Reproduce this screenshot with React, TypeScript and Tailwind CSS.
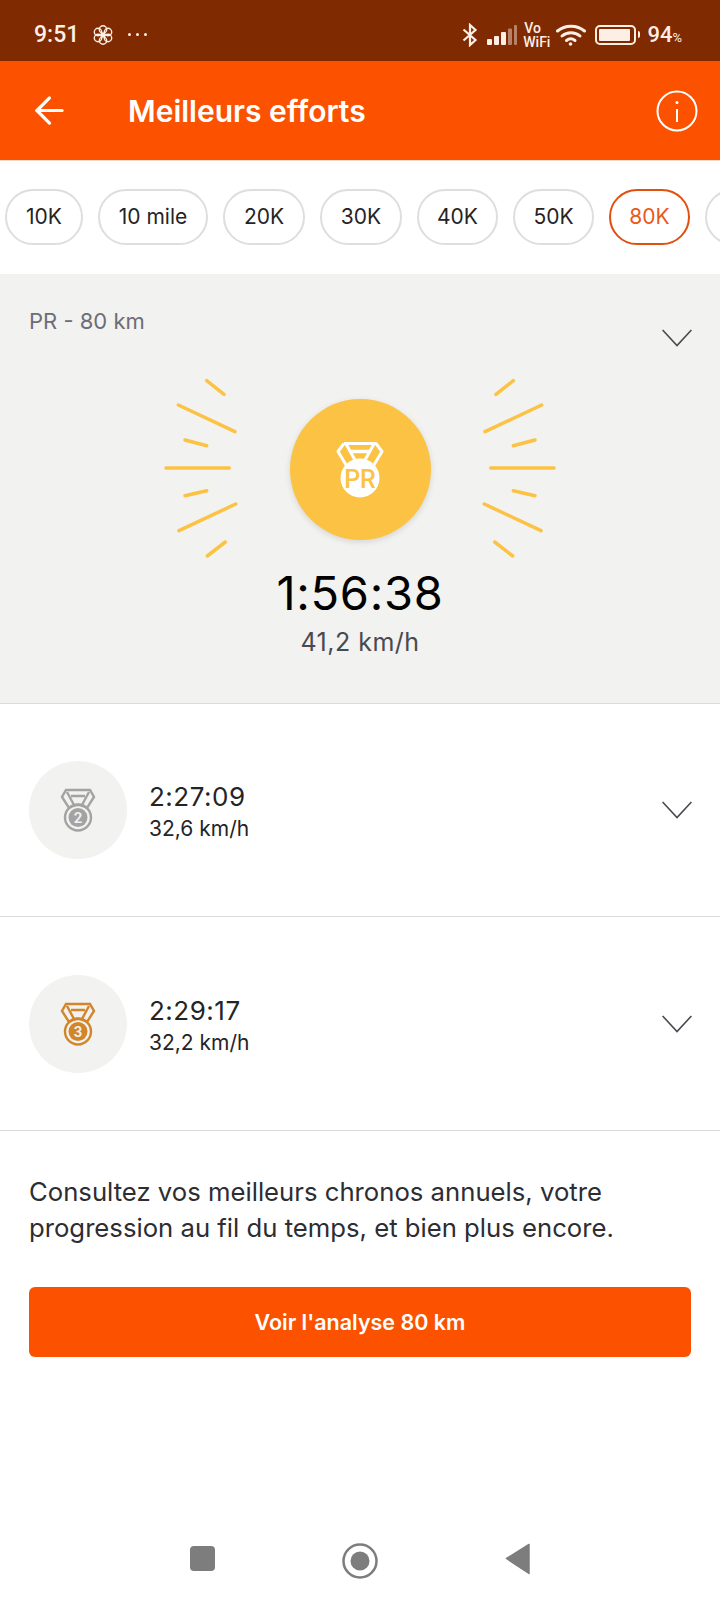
import React from 'react';
import { ArrowLeft } from 'lucide-react';

const chips = [
  { label: '10K', width: 'w-[78px]' },
  { label: '10 mile', width: 'w-[110px]' },
  { label: '20K', width: 'w-[82px]' },
  { label: '30K', width: 'w-[82px]' },
  { label: '40K', width: 'w-[81px]' },
  { label: '50K', width: 'w-[81px]' },
  { label: '80K', width: 'w-[81px]', active: true },
  { label: '', width: 'w-[81px]' },
];

// left side rays, the right side is mirrored around x = 200
const rays = [
  [46.7, 11.7, 64, 25.3],
  [18.3, 36, 75, 62.7],
  [25, 71, 46.7, 76.7],
  [6, 99, 69.3, 99],
  [25, 126.7, 46.7, 121.7],
  [19, 161.7, 75.7, 135],
  [47.3, 187, 65.3, 173],
];

const Chevron = ({ className }: { className?: string }) => (
  <svg className={className} width="30" height="18" viewBox="0 0 30 18" fill="none" stroke="#494950" strokeWidth="1.6">
    <path d="M.6 1 15 16.500 29.400 1" />
  </svg>
);

const StatusBar = () => (
  <div className="flex h-[61px] items-center bg-[#7f2a00] pl-[34px] pr-[38px] pt-[8px] text-[#fdeee6]">
    <span className="font-['Roboto',sans-serif] text-[23px] font-medium leading-none">9:51</span>
    <svg className="ml-[14px]" width="20" height="22" viewBox="0 0 20 22" fill="none" stroke="currentColor" strokeWidth="1.4">
      <circle cx="10" cy="5.500" r="3.700" />
      <circle cx="10" cy="16.500" r="3.700" />
      <circle cx="5" cy="8" r="3.700" />
      <circle cx="15" cy="8" r="3.700" />
      <circle cx="5" cy="14" r="3.700" />
      <circle cx="15" cy="14" r="3.700" />
      <circle cx="10" cy="11" r="1.600" fill="currentColor" />
    </svg>
    <div className="ml-[15px] flex gap-[5px]">
      <span className="h-[3px] w-[3px] rounded-full bg-current" />
      <span className="h-[3px] w-[3px] rounded-full bg-current" />
      <span className="h-[3px] w-[3px] rounded-full bg-current" />
    </div>
    <div className="ml-auto flex items-center">
      <svg width="16" height="24" viewBox="0 0 16 24" fill="none" stroke="currentColor" strokeWidth="2.200">
        <path d="M1.500 6.500 13.500 17 8 22V2l5.500 5L1.500 17.500" />
      </svg>
      <svg className="ml-[9px]" width="30" height="20" viewBox="0 0 30 20" fill="currentColor">
        <rect x="0" y="14" width="5" height="6" rx="1" />
        <rect x="7" y="11" width="5" height="9" rx="1" />
        <rect x="14" y="7" width="5" height="13" rx="1" />
        <rect x="21" y="3.500" width="4" height="16.500" rx="1" opacity="0.45" />
        <rect x="27" y="0" width="3" height="20" rx="1" opacity="0.45" />
      </svg>
      <div className="ml-[6px] flex flex-col font-['Roboto',sans-serif] text-[14px] font-medium leading-[14px]">
        <span className="pl-[1px]">Vo</span>
        <span>WiFi</span>
      </div>
      <svg className="ml-[6px]" width="30" height="22" viewBox="0 0 30 22" fill="none" stroke="currentColor" strokeWidth="3" strokeLinecap="round">
        <path d="M1.500 7C9 .5 21 .5 28.500 7" />
        <path d="M6 12c5-4.500 13-4.500 18 0" />
        <path d="M10.500 16.500c2.500-2 6-2 8.500 0" />
        <circle cx="14.500" cy="20" r="1.800" fill="currentColor" stroke="none" />
      </svg>
      <div className="ml-[9px] flex h-[20px] w-[41px] items-center rounded-[5px] border-2 border-current p-[2px]">
        <div className="h-full w-[92%] rounded-[1px] bg-current" />
      </div>
      <div className="ml-[2px] h-[7px] w-[2px] rounded-r-full bg-current" />
      <span className="ml-[7px] font-['Roboto',sans-serif] text-[22px] font-medium leading-none">94</span>
      <span className="mt-[5px] font-['Roboto',sans-serif] text-[13px] leading-none">%</span>
    </div>
  </div>
);

const Header = () => (
  <div className="flex h-[100px] items-center justify-between border-b border-[#f5d9cb] bg-[#fc5200] pl-[28px] pr-[22px] text-white">
    <div className="flex items-center">
      <ArrowLeft size={43} strokeWidth={1.800} />
      <h1 className="ml-[57px] text-[30px] font-semibold leading-none">Meilleurs efforts</h1>
    </div>
    <svg width="42" height="42" viewBox="0 0 42 42" fill="none" stroke="currentColor" strokeWidth="2">
      <circle cx="21" cy="21" r="19.500" />
      <path d="M21 19v13" />
      <circle cx="21" cy="12.500" r="1.500" fill="currentColor" stroke="none" />
    </svg>
  </div>
);

const DistanceChips = () => (
  <div className="flex h-[113px] items-start gap-[15px] overflow-hidden pl-[5px] pt-[28px]">
    {chips.map((chip, i) => (
      <div
        key={i}
        className={`flex h-[56px] shrink-0 items-center justify-center rounded-full border-2 text-[21px] ${chip.width} ${
          chip.active ? 'border-[#e0500f] text-[#e85a1c]' : 'border-[#dedede] text-[#242428]'
        }`}
      >
        {chip.label}
      </div>
    ))}
  </div>
);

const PrMedal = () => (
  <svg width="52" height="62" viewBox="0 0 52 62" fill="none">
    <g stroke="#fff" strokeWidth="3" strokeLinejoin="round">
      <path d="M10 5.500h32l6 8-9 15M10 5.500l-6 8 9 15" />
      <path d="M12 6l9 16M40 6l-9 16" />
      <path d="M16 13.500h20" strokeWidth="3.500" />
    </g>
    <circle cx="26" cy="40" r="19.500" fill="#fff" />
    <text x="26" y="49.500" textAnchor="middle" fontSize="25" fontWeight="500" fill="#fcc244" fontFamily="Roboto, sans-serif">
      PR
    </text>
  </svg>
);

const PrPanel = () => (
  <div className="h-[430px] border-b border-[#dcdcdc] bg-[#f2f2f0]">
    <div className="flex h-[95px] items-start justify-between pl-[29px] pr-[28px] pt-[35px]">
      <span className="text-[22px] leading-[24px] text-[#6d6d78]">PR - 80 km</span>
      <Chevron className="mt-[20px]" />
    </div>
    <div className="relative mx-auto h-[200px] w-[400px]">
      <svg width="400" height="200" viewBox="0 0 400 200" stroke="#fcc244" strokeWidth="3.500" strokeLinecap="round">
        {rays.map(([x1, y1, x2, y2], i) => (
          <g key={i}>
            <line x1={x1} y1={y1} x2={x2} y2={y2} />
            <line x1={400 - x1} y1={y1} x2={400 - x2} y2={y2} />
          </g>
        ))}
      </svg>
      <div className="absolute inset-0 flex items-center justify-center">
        <div className="flex h-[141px] w-[141px] items-center justify-center rounded-full bg-[#fcc244] shadow-[0_2px_6px_rgba(0,0,0,0.12)]">
          <PrMedal />
        </div>
      </div>
    </div>
    <div className="mt-[-4px] text-center text-[47px] leading-[56px] tracking-[0.7px] text-black">1:56:38</div>
    <div className="mt-[7px] text-center text-[25px] leading-[28px] tracking-[0.5px] text-[#494950]">41,2 km/h</div>
  </div>
);

const RankMedal = ({ rank, color }: { rank: number; color: string }) => (
  <svg width="36" height="44" viewBox="0 0 36 44" fill="none" stroke={color} strokeWidth="2.400">
    <path d="M6 2h24l4 7-7 11-4-2-3.500-1h-3L13 18l-4 2L2 9z" />
    <path d="M7 4l7 13M29 4l-7 13M11 8h14" />
    <circle cx="18" cy="29.500" r="13" />
    <circle cx="18" cy="29.500" r="9.500" fill={color} stroke="none" />
    <text x="18" y="35" textAnchor="middle" fontSize="15" fontWeight="600" fill="#f2f2f0" stroke="none" fontFamily="Roboto, sans-serif">
      {rank}
    </text>
  </svg>
);

const EffortRow = ({
  rank,
  color,
  time,
  speed,
  height,
}: {
  rank: number;
  color: string;
  time: string;
  speed: string;
  height: string;
}) => (
  <div className={`flex items-center border-b border-[#dcdcdc] pl-[29px] pr-[28px] ${height}`}>
    <div className="flex h-[98px] w-[98px] items-center justify-center rounded-full bg-[#f2f2f0]">
      <RankMedal rank={rank} color={color} />
    </div>
    <div className="ml-[22px] flex flex-col pt-[5px]">
      <span className="text-[26px] leading-[32px] tracking-[0.5px] text-[#242428]">{time}</span>
      <span className="mt-[1px] text-[21px] leading-[30px] text-[#242428]">{speed}</span>
    </div>
    <Chevron className="ml-auto" />
  </div>
);

const NavBar = () => (
  <div className="mt-auto flex h-[86px] items-start justify-center gap-[127px] pt-[29px] text-[#7d7d7d]">
    <div className="mt-[3px] h-[25px] w-[25px] rounded-[4px] bg-current" />
    <svg width="36" height="36" viewBox="0 0 36 36" fill="currentColor">
      <circle cx="18" cy="18" r="16.500" fill="none" stroke="currentColor" strokeWidth="2.500" />
      <circle cx="18" cy="18" r="9.500" />
    </svg>
    <svg width="26" height="32" viewBox="0 0 26 32" fill="currentColor">
      <path d="M24 1.500 1.500 15.500 24 30.500z" stroke="currentColor" strokeWidth="1.500" strokeLinejoin="round" />
    </svg>
  </div>
);

export default function App() {
  return (
    <div className="flex h-[1600px] w-[720px] flex-col overflow-hidden bg-white font-['Inter',sans-serif]">
      <StatusBar />
      <Header />
      <DistanceChips />
      <PrPanel />
      <EffortRow rank={2} color="#a3a3a3" time="2:27:09" speed="32,6 km/h" height="h-[213px]" />
      <EffortRow rank={3} color="#d2862c" time="2:29:17" speed="32,2 km/h" height="h-[214px]" />
      <p className="px-[29px] pt-[43px] text-[25.700px] leading-[36px] text-[#2d2d32]">
        Consultez vos meilleurs chronos annuels, votre progression au fil du temps, et bien plus encore.
      </p>
      <button className="mx-[29px] mt-[41px] h-[70px] rounded-[6px] bg-[#fc5200] text-[21.500px] font-semibold text-white">
        Voir l'analyse 80 km
      </button>
      <NavBar />
    </div>
  );
}
